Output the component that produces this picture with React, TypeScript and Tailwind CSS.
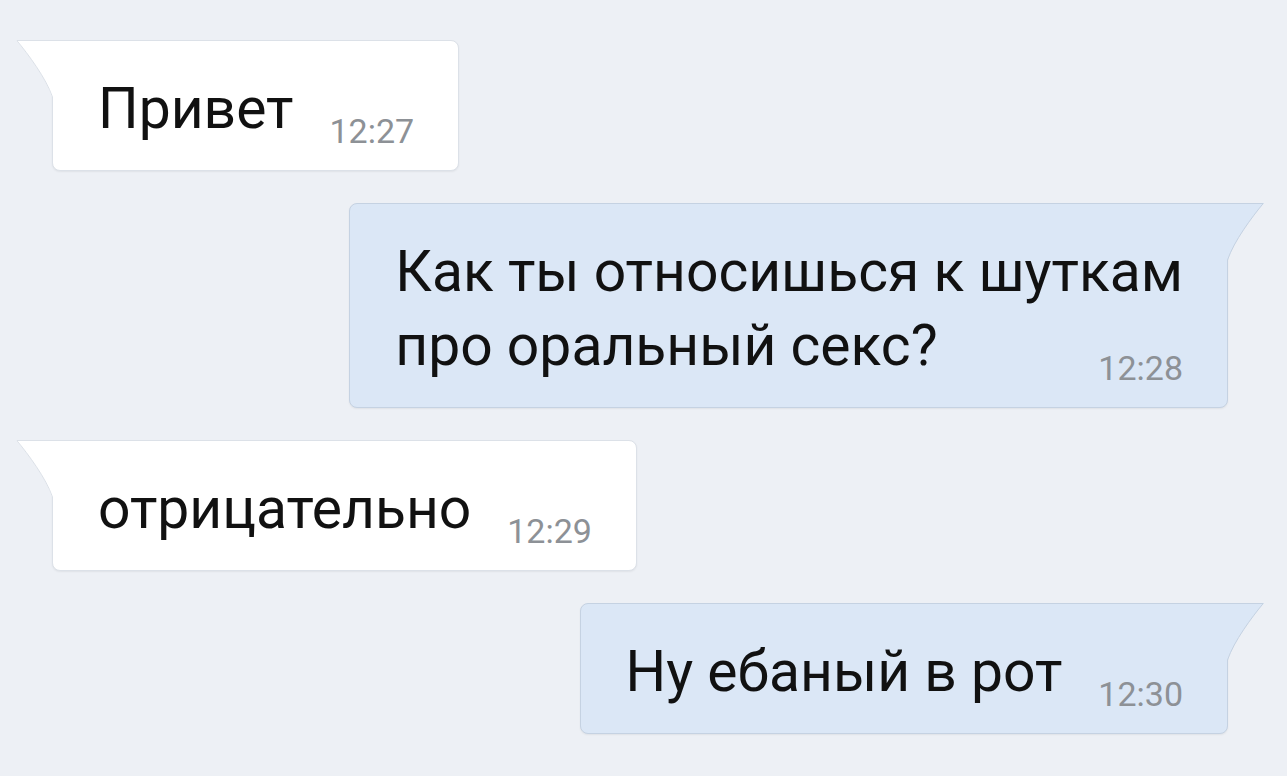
type Msg = { out: boolean; lines: string[]; time: string }

const messages: Msg[] = [
  { out: false, lines: ['Привет'], time: '12:27' },
  { out: true, lines: ['Как ты относишься к шуткам', 'про оральный секс?'], time: '12:28' },
  { out: false, lines: ['отрицательно'], time: '12:29' },
  { out: true, lines: ['Ну ебаный в рот'], time: '12:30' },
]

function Tail({ out }: { out: boolean }) {
  if (out) {
    return (
      <svg width="37" height="57" viewBox="0 0 37 57" className="absolute top-[-1px] right-[-37px]">
        <path d="M37 0 H0 V57 H1 C7 38 25 14 37 0 Z" fill="#dbe7f6" />
        <path d="M0 0.5 H36.2 C25 14 7 38 0.5 57" fill="none" stroke="#c5d2e2" strokeWidth="1" />
      </svg>
    )
  }
  return (
    <svg width="37" height="57" viewBox="0 0 37 57" className="absolute top-[-1px] left-[-37px]">
      <path d="M0 0 H37 V57 H36 C30 38 12 14 0 0 Z" fill="#ffffff" />
      <path d="M37 0.5 H0.8 C12 14 30 38 36.5 57" fill="none" stroke="#dce1e8" strokeWidth="1" />
    </svg>
  )
}

function Bubble({ msg }: { msg: Msg }) {
  const first = msg.lines.slice(0, -1)
  const last = msg.lines[msg.lines.length - 1]
  return (
    <div
      className={`relative border rounded-[8px] pl-[45px] pr-[44px] pt-[31px] pb-[24px] shadow-[0_1px_2px_rgba(0,0,0,0.06)] ${
        msg.out
          ? 'self-end mr-[59px] bg-[#dbe7f6] border-[#c5d2e2] rounded-tr-none'
          : 'self-start ml-[52px] bg-white border-[#dce1e8] rounded-tl-none'
      }`}
    >
      <Tail out={msg.out} />
      {first.map((l) => (
        <div key={l} className="whitespace-nowrap text-[57px] leading-[74px] text-[#111111]">
          {l}
        </div>
      ))}
      <div className="flex items-baseline justify-between gap-[36px]">
        <span className="whitespace-nowrap text-[57px] leading-[74px] text-[#111111]">{last}</span>
        <span className="shrink-0 translate-y-[15px] text-[34px] leading-none text-[#8d9196]">{msg.time}</span>
      </div>
    </div>
  )
}

export default function App() {
  return (
    <div className="min-h-screen bg-[#edf0f5] font-[Roboto,sans-serif] flex flex-col gap-[32px] pt-[40px]">
      {messages.map((m) => (
        <Bubble key={m.time} msg={m} />
      ))}
    </div>
  )
}
